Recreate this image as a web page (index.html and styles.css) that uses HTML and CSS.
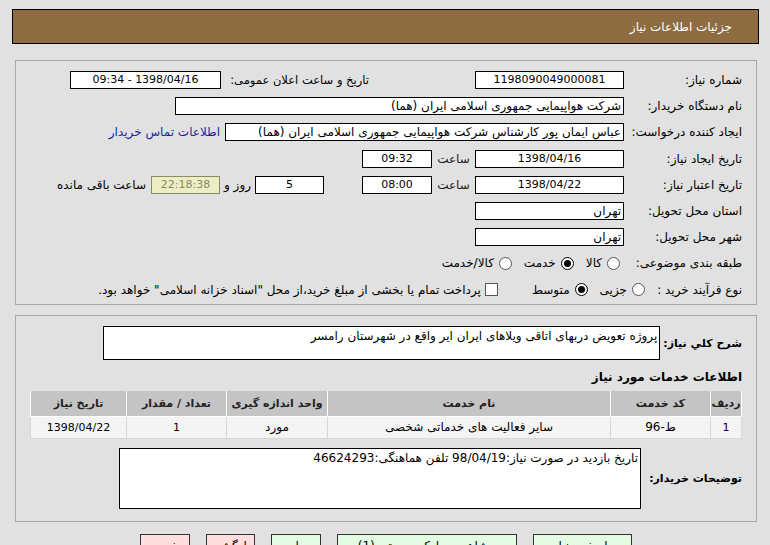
FILE: index.html
```html
<!DOCTYPE html>
<html lang="fa" dir="rtl">
<head>
<meta charset="utf-8">
<title>جزئیات اطلاعات نیاز</title>
<link rel="stylesheet" href="styles.css">
</head>
<body>
<div class="page">
  <div class="header">جزئیات اطلاعات نیاز</div>

  <div class="panel panel-main">
    <div class="row">
      <span class="lbl">شماره نیاز:</span>
      <span class="box w149 center num">1198090049000081</span>
      <span class="lbl2">تاریخ و ساعت اعلان عمومی:</span>
      <span class="box w151 center num">1398/04/16 - 09:34</span>
    </div>
    <div class="row">
      <span class="lbl">نام دستگاه خریدار:</span>
      <span class="box w449">شرکت هواپیمایی جمهوری اسلامی ایران (هما)</span>
    </div>
    <div class="row">
      <span class="lbl">ایجاد کننده درخواست:</span>
      <span class="box w399">عباس ایمان پور کارشناس شرکت هواپیمایی جمهوری اسلامی ایران (هما)</span>
      <a class="link" href="#">اطلاعات تماس خریدار</a>
    </div>
    <div class="row">
      <span class="lbl">تاریخ ایجاد نیاز:</span>
      <span class="box w149 center num">1398/04/16</span>
      <span class="hour">ساعت</span>
      <span class="box w70 center num">09:32</span>
    </div>
    <div class="row">
      <span class="lbl">تاریخ اعتبار نیاز:</span>
      <span class="box w149 center num">1398/04/22</span>
      <span class="hour">ساعت</span>
      <span class="box w70 center num">08:00</span>
      <span class="box w69 center num days">5</span>
      <span class="and">روز و</span>
      <span class="box w69 center num remain">22:18:38</span>
      <span class="remain-lbl">ساعت باقی مانده</span>
    </div>
    <div class="row">
      <span class="lbl">استان محل تحویل:</span>
      <span class="box w149">تهران</span>
    </div>
    <div class="row">
      <span class="lbl">شهر محل تحویل:</span>
      <span class="box w149">تهران</span>
    </div>
    <div class="row">
      <span class="lbl">طبقه بندی موضوعی:</span>
      <span class="opt first"><span class="radio"></span>کالا</span>
      <span class="opt"><span class="radio on"></span>خدمت</span>
      <span class="opt"><span class="radio"></span>کالا/خدمت</span>
    </div>
    <div class="row">
      <span class="lbl short">نوع فرآیند خرید :</span>
      <span class="opt zero"><span class="radio"></span>جزیی</span>
      <span class="opt"><span class="radio on"></span>متوسط</span>
      <span class="opt chk"><span class="check"></span>پرداخت تمام یا بخشی از مبلغ خرید،از محل "اسناد خزانه اسلامی" خواهد بود.</span>
    </div>
  </div>

  <div class="panel panel-desc">
    <div class="row-desc">
      <span class="blbl w79">شرح كلي نياز:</span>
      <div class="area a1">پروژه تعویض دربهای اتاقی ویلاهای ایران ایر واقع در شهرستان رامسر</div>
    </div>
    <div class="sub-title">اطلاعات خدمات مورد نیاز</div>
    <table class="grid">
      <colgroup>
        <col class="c1"><col class="c2"><col class="c3"><col class="c4"><col class="c5"><col class="c6">
      </colgroup>
      <thead>
        <tr><th>ردیف</th><th>کد خدمت</th><th>نام خدمت</th><th>واحد اندازه گیری</th><th>تعداد / مقدار</th><th>تاریخ نیاز</th></tr>
      </thead>
      <tbody>
        <tr><td class="num">1</td><td>ط-96</td><td>سایر فعالیت های خدماتی شخصی</td><td>مورد</td><td class="num">1</td><td class="num">1398/04/22</td></tr>
      </tbody>
    </table>
    <div class="row-desc notes">
      <span class="blbl w101">توضیحات خریدار:</span>
      <div class="area a2">تاریخ بازدید در صورت نیاز:98/04/19 تلفن هماهنگی:46624293</div>
    </div>
  </div>

  <div class="buttons">
    <span class="btn green w99">پاسخ به نیاز</span>
    <span class="btn green w180">مشاهده مدارک پیوستی (1)</span>
    <span class="btn green w50">چاپ</span>
    <span class="btn pink w49">بازگشت</span>
    <span class="btn pink w50">خروج</span>
  </div>
</div>
</body>
</html>
```

FILE: styles.css
```css
* { box-sizing: border-box; }

html, body {
  margin: 0;
  padding: 0;
}

body {
  background: #e1e1e1;
  font-family: "DejaVu Sans", sans-serif;
  font-size: 12px;
  color: #000;
  direction: rtl;
  width: 770px;
  height: 545px;
  overflow: hidden;
}

.page {
  padding: 9px 11px 0 12px;
}

.header {
  height: 35px;
  background: #8d6c41;
  border: 1px solid #000;
  color: #fff;
  font-size: 12px;
  display: flex;
  align-items: center;
  padding-right: 26px;
}

.panel {
  border: 1px solid #a8a8a8;
  margin: 0 2px 0 3px;
}

.panel-main {
  margin-top: 16px;
  padding: 6px 14px 1px 0;
  height: 245px;
}

.row {
  display: flex;
  align-items: center;
  height: 26.2px;
  white-space: nowrap;
}

.lbl {
  width: 118px;
  flex: none;
}

.lbl.short { width: 97px; }

.lbl2 {
  width: 148px;
  margin-right: 106px;
  flex: none;
  font-size: 11.5px;
}

.box {
  height: 18px;
  line-height: 16px;
  border: 1px solid #000;
  background: #fff;
  padding: 0 2px;
  flex: none;
  overflow: hidden;
}

.num { font-size: 11px; }

.center { text-align: center; }

.w149 { width: 149px; }
.w151 { width: 151px; }
.w449 { width: 449px; }
.w399 { width: 399px; }
.w70 { width: 70px; }
.w69 { width: 69px; }

.link {
  color: #1f1fa0;
  text-decoration: none;
  margin-right: 5px;
}

.hour {
  width: 43px;
  text-align: center;
  flex: none;
  color: #222;
}

.days { margin-right: 38px; }

.and {
  width: 35px;
  text-align: center;
  flex: none;
}

.remain {
  background: #eeeec4;
  border-color: #8a8a6a;
  color: #88886a;
}

.remain-lbl { margin-right: 5px; }

.opt {
  display: flex;
  align-items: center;
  margin-right: 12px;
}

.opt.first { margin-right: 4px; }
.opt.zero { margin-right: 0; }

.radio {
  width: 13px;
  height: 13px;
  border: 1px solid #555;
  border-radius: 50%;
  background: #fff;
  margin-left: 5px;
  position: relative;
  flex: none;
}

.radio.on { border: 1px solid #000; }

.radio.on::after {
  content: "";
  position: absolute;
  left: 2px;
  top: 2px;
  width: 7px;
  height: 7px;
  border-radius: 50%;
  background: #000;
}

.opt.chk { margin-right: 34px; }

.check {
  width: 13px;
  height: 13px;
  border: 1px solid #555;
  background: #fff;
  margin-left: 4px;
  flex: none;
}

.panel-desc {
  margin-top: 10px;
  padding: 10px 14px 12px 0;
}

.row-desc {
  display: flex;
  align-items: center;
}

.blbl {
  font-weight: bold;
  font-size: 11px;
  flex: none;
  white-space: nowrap;
  padding-left: 3px;
}

.w79 { width: auto; }
.w101 { width: 101px; }

.area {
  border: 1px solid #000;
  background: #fff;
  padding: 2px 2px;
  line-height: 15px;
  flex: none;
}

.a1 { width: 557px; height: 34px; }
.a2 { width: 522px; height: 61px; }

.sub-title {
  font-weight: bold;
  font-size: 12px;
  margin-top: 9px;
  height: 17px;
  line-height: 17px;
}

.grid {
  width: 711px;
  border-collapse: collapse;
  margin-top: 5px;
  table-layout: fixed;
}

.c1 { width: 31px; }
.c2 { width: 100px; }
.c3 { width: 283px; }
.c4 { width: 101px; }
.c5 { width: 100px; }
.c6 { width: 96px; }

.grid th {
  background: #c4c4c4;
  height: 25px;
  font-weight: bold;
  font-size: 11px;
  color: #222;
  border: 1px solid #fff;
  border-top: none;
  padding: 0;
  white-space: nowrap;
}

.grid td {
  background: #f4f4f4;
  height: 22px;
  text-align: center;
  border: 1px solid #d8d8d8;
  padding: 0;
}

.notes { margin-top: 9px; }

.buttons {
  display: flex;
  justify-content: center;
  gap: 16px;
  margin-top: 12px;
}

.btn {
  height: 24px;
  line-height: 22px;
  border: 1px solid #333;
  text-align: center;
  flex: none;
  white-space: nowrap;
}

.green { background: #e4fbe4; }
.pink { background: #ffdede; }

.w99 { width: 99px; }
.w180 { width: 180px; }
.w50 { width: 50px; }
.w49 { width: 49px; }
```
